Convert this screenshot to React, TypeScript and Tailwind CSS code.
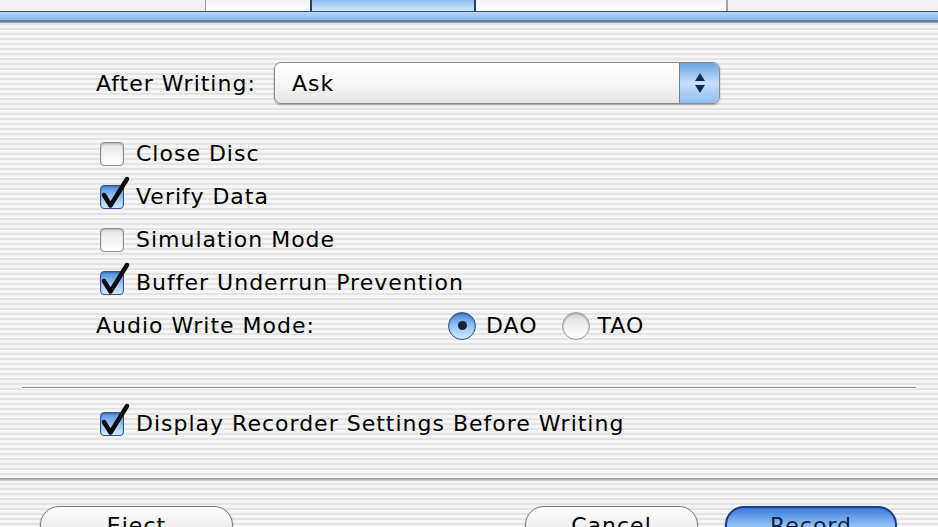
import React from 'react';

const Checkbox: React.FC<{ checked?: boolean }> = ({ checked }) => (
  <span
    className={
      'relative ml-[4px] h-[24px] w-[24px] shrink-0 rounded-[4px] border shadow-[inset_0_1px_2px_rgba(0,0,0,0.25)] ' +
      (checked
        ? 'border-[#34588c] bg-gradient-to-b from-[#4d8fe0] via-[#95c3f3] to-[#cfe8ff]'
        : 'border-[#8e8e8e] bg-gradient-to-b from-[#e2e2e2] via-[#f5f5f5] to-white')
    }
  >
    {checked && (
      <svg className="absolute -left-[3px] -top-[11px]" width="34" height="36" viewBox="0 0 34 36">
        <path d="M6 20 L12.5 30.5 L29 4" fill="none" stroke="#0a0a0a" strokeWidth="4.5" strokeLinecap="round" strokeLinejoin="round" />
      </svg>
    )}
  </span>
);

const Radio: React.FC<{ on?: boolean }> = ({ on }) => (
  <span
    className={
      'flex h-[28px] w-[28px] shrink-0 items-center justify-center rounded-full border shadow-[inset_0_1px_2px_rgba(0,0,0,0.3)] ' +
      (on
        ? 'border-[#30548b] bg-gradient-to-b from-[#4689da] via-[#96c3f3] to-[#d3eaff]'
        : 'border-[#9a9a9a] bg-gradient-to-b from-[#d8d8d8] via-[#f1f1f1] to-white')
    }
  >
    {on && <span className="h-[9px] w-[9px] rounded-full bg-[#15233f]" />}
  </span>
);

const CheckRow: React.FC<{ label: string; checked?: boolean }> = ({ label, checked }) => (
  <div className="flex h-[43px] items-center gap-[12px] pl-[96px]">
    <Checkbox checked={checked} />
    <span>{label}</span>
  </div>
);

const App: React.FC = () => {
  return (
    <div className="h-[527px] w-[938px] overflow-hidden bg-[repeating-linear-gradient(180deg,#f6f6f6_0px,#f6f6f6_3px,#e4e4e4_3px,#e4e4e4_5px)] font-['DejaVu_Sans',sans-serif] text-[22px] tracking-[1px] text-black">
      {/* tabs, cut off at the top */}
      <div className="flex h-[11px] bg-[#f2f2f2]">
        <div className="w-[205px]" />
        <div className="w-[107px] border-l border-r-2 border-l-[#9c9c9c] border-r-[#2d4166] bg-gradient-to-b from-[#f4f4f4] to-white" />
        <div className="w-[162px] bg-gradient-to-b from-[#8dbdf0] to-[#d2e9ff]" />
        <div className="w-[254px] border-l-2 border-r-2 border-l-[#2d4166] border-r-[#a4a4a4] bg-gradient-to-b from-[#f4f4f4] to-white" />
      </div>
      <div className="h-[1px] bg-[#34507c]" />
      <div className="h-[8px] bg-gradient-to-b from-[#b6d4f6] to-[#8fb7ea]" />
      <div className="h-[2px] bg-[#62809f]" />
      <div className="h-[1px] bg-[#a4a4a4]" />

      {/* panel */}
      <div className="h-[455px] pt-[39px]">
        <div className="flex h-[42px] items-center pl-[96px]">
          <span className="w-[178px]">After Writing:</span>
          <div className="flex h-[42px] w-[446px] overflow-hidden rounded-[7px] border border-[#8a8a8a] bg-gradient-to-b from-white via-[#f7f7f7] to-[#e4e4e4] shadow-[0_1px_2px_rgba(0,0,0,0.3)]">
            <span className="flex flex-1 items-center pl-[17px]">Ask</span>
            <div className="flex w-[40px] flex-col items-center justify-center gap-[4px] border-l border-[#5f83b8] bg-gradient-to-b from-[#6aa3e4] via-[#c6e0fb] to-[#8fbdf0]">
              <svg width="10" height="8" viewBox="0 0 10 8">
                <path d="M5 0 L10 8 L0 8 Z" fill="#18284a" />
              </svg>
              <svg width="10" height="8" viewBox="0 0 10 8">
                <path d="M0 0 L10 0 L5 8 Z" fill="#18284a" />
              </svg>
            </div>
          </div>
        </div>

        <div className="mt-[28px]">
          <CheckRow label="Close Disc" />
          <CheckRow label="Verify Data" checked />
          <CheckRow label="Simulation Mode" />
          <CheckRow label="Buffer Underrun Prevention" checked />
          <div className="flex h-[43px] items-center pl-[96px]">
            <span className="w-[352px]">Audio Write Mode:</span>
            <Radio on />
            <span className="ml-[10px]">DAO</span>
            <span className="ml-[24px]">
              <Radio />
            </span>
            <span className="ml-[8px]">TAO</span>
          </div>
        </div>

        <div className="mx-[22px] mt-[40px] h-[2px] border-b border-b-[#fafafa] bg-[#8e8e8e]" />

        <div className="mt-[13px]">
          <CheckRow label="Display Recorder Settings Before Writing" checked />
        </div>
      </div>

      {/* panel bottom edge */}
      <div className="h-[3px] bg-gradient-to-b from-[#9c9c9c] via-[#b4b4b4] to-[#d8d8d8]" />

      {/* buttons */}
      <div className="mt-[25px] flex">
        <button className="ml-[40px] flex h-[38px] w-[193px] items-center justify-center rounded-full border border-[#7a7a7a] bg-gradient-to-b from-white via-[#f0f0f0] to-[#dcdcdc] shadow-[0_1px_2px_rgba(0,0,0,0.3)]">
          Eject
        </button>
        <button className="ml-[292px] flex h-[38px] w-[173px] items-center justify-center rounded-full border border-[#7a7a7a] bg-gradient-to-b from-white via-[#f0f0f0] to-[#dcdcdc] shadow-[0_1px_2px_rgba(0,0,0,0.3)]">
          Cancel
        </button>
        <button className="ml-[27px] flex h-[38px] w-[172px] items-center justify-center rounded-full border-2 border-[#1b3d86] bg-gradient-to-b from-[#3a7ad8] via-[#8ec0f5] to-[#c4e2ff] text-[#0f1e40] shadow-[0_1px_2px_rgba(0,0,0,0.3)]">
          Record
        </button>
      </div>
    </div>
  );
};

export default App;
